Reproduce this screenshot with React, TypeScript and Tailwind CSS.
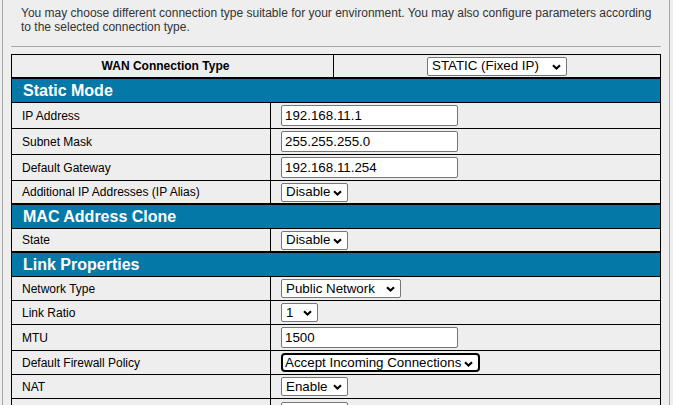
import type { ReactNode } from "react"

function Chevron() {
  return (
    <svg width="9" height="6" viewBox="0 0 9 6" className="absolute right-[5px] top-[6px]">
      <path d="M1 1.2 L4.5 4.5 L8 1.2" fill="none" stroke="#000" strokeWidth="2.1" />
    </svg>
  )
}

function Select({ value, w, focused = false }: { value: string; w: string; focused?: boolean }) {
  return (
    <div
      className={
        focused
          ? `relative ${w} flex h-[19px] items-center rounded-[4px] border-2 border-black bg-white pl-[2px] text-[13.33px] text-black`
          : `relative ${w} flex h-[19px] items-center rounded-[2px] border border-[#767676] bg-white pl-[4px] text-[13.33px] text-black`
      }
    >
      <span className="leading-none whitespace-nowrap">{value}</span>
      {value && <Chevron />}
    </div>
  )
}

function TextInput({ value }: { value: string }) {
  return (
    <input
      defaultValue={value}
      className="h-[21px] w-[177px] rounded-[2px] border border-[#767676] bg-white px-[3px] text-[13.33px] text-black outline-none"
    />
  )
}

function Row({ label, h, children }: { label: string; h: string; children: ReactNode }) {
  return (
    <div className={`flex ${h} border-b border-black`}>
      <div className="flex w-[259px] items-center border-r border-black pl-[10px] text-[12px] text-black">{label}</div>
      <div className="flex flex-1 items-center pl-[10px]">{children}</div>
    </div>
  )
}

function Section({ title }: { title: string }) {
  return (
    <div className="flex h-[25px] items-center border-y border-black bg-[#0479a8] pl-[11px] text-[16px] font-bold text-white">
      {title}
    </div>
  )
}

export default function App() {
  return (
    <div className="h-[405px] w-[673px] overflow-hidden bg-[#eeeeee] font-['Liberation_Sans',Arial,sans-serif]">
      <div className="ml-[2px] h-full w-[668px] border-x border-[#a5a5a5] pl-[8px]">
        {/* intro */}
        <p className="pt-[6px] pl-[10px] text-[12px] leading-[14px] whitespace-nowrap text-[#333]">
          You may choose different connection type suitable for your environment. You may also configure parameters according
          <br />
          to the selected connection type.
        </p>
        <div className="mt-[12px] h-px w-[650px] bg-[#a9a9a9]" />

        <div className="mt-[7px] w-[650px] border-x border-t border-black">
          <div className="flex h-[23px] border-b border-black">
            <div className="flex w-[322px] items-center justify-center border-r border-black pr-[14px] text-[12px] font-bold text-black">
              WAN Connection Type
            </div>
            <div className="flex flex-1 items-center justify-center">
              <Select value="STATIC (Fixed IP)" w="w-[140px]" />
            </div>
          </div>

          <Section title="Static Mode" />
          <Row label="IP Address" h="h-[26px]">
            <TextInput value="192.168.11.1" />
          </Row>
          <Row label="Subnet Mask" h="h-[26px]">
            <TextInput value="255.255.255.0" />
          </Row>
          <Row label="Default Gateway" h="h-[26px]">
            <TextInput value="192.168.11.254" />
          </Row>
          <Row label="Additional IP Addresses (IP Alias)" h="h-[23px]">
            <Select value="Disable" w="w-[67px]" />
          </Row>

          <Section title="MAC Address Clone" />
          <Row label="State" h="h-[23px]">
            <Select value="Disable" w="w-[67px]" />
          </Row>

          <Section title="Link Properties" />
          <Row label="Network Type" h="h-[24px]">
            <Select value="Public Network" w="w-[120px]" />
          </Row>
          <Row label="Link Ratio" h="h-[24px]">
            <Select value="1" w="w-[37px]" />
          </Row>
          <Row label="MTU" h="h-[26px]">
            <TextInput value="1500" />
          </Row>
          <Row label="Default Firewall Policy" h="h-[24px]">
            <Select value="Accept Incoming Connections" w="w-[199px]" focused />
          </Row>
          <Row label="NAT" h="h-[24px]">
            <Select value="Enable" w="w-[67px]" />
          </Row>
          <div className="flex h-[24px] items-start">
            <div className="h-full w-[259px] border-r border-black" />
            <div className="pt-[3px] pl-[10px]">
              <Select value="" w="w-[67px]" />
            </div>
          </div>
        </div>
      </div>
    </div>
  )
}
